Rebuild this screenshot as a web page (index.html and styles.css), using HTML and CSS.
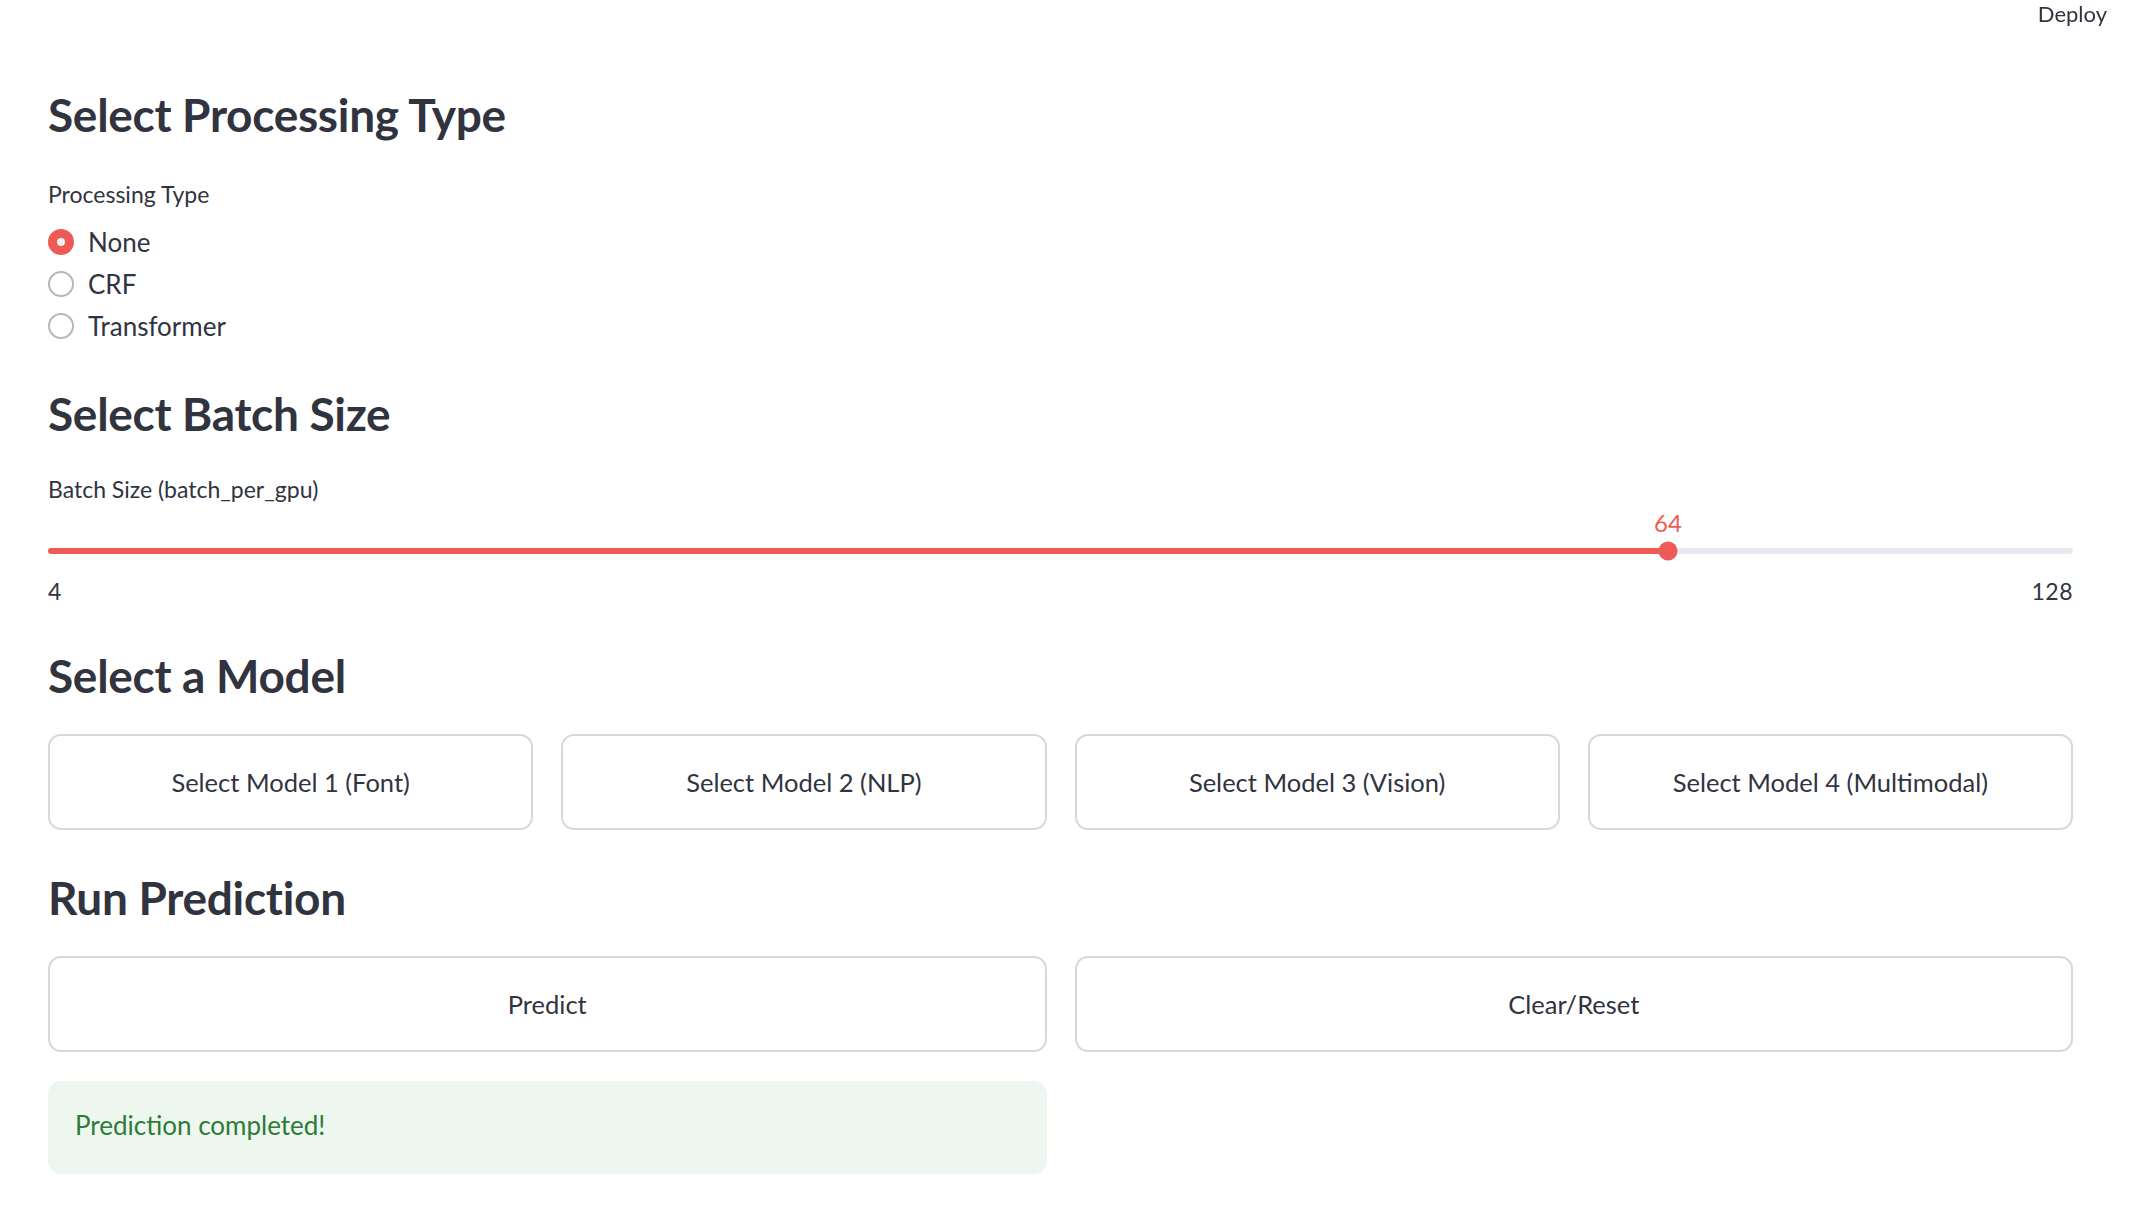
FILE: index.html
```html
<!DOCTYPE html>
<html lang="en">
<head>
<meta charset="utf-8">
<title>Streamlit</title>
<link rel="stylesheet" href="styles.css">
</head>
<body>
<header class="toolbar">
  <span class="deploy">Deploy</span>
</header>
<main class="block">
  <h3 class="heading h-first">Select Processing Type</h3>
  <div class="label label-radio">Processing Type</div>
  <div class="radio-group">
    <div class="radio-row"><span class="radio checked"></span><span class="radio-text">None</span></div>
    <div class="radio-row"><span class="radio"></span><span class="radio-text">CRF</span></div>
    <div class="radio-row"><span class="radio"></span><span class="radio-text">Transformer</span></div>
  </div>

  <h3 class="heading h-batch">Select Batch Size</h3>
  <div class="label label-slider">Batch Size (batch_per_gpu)</div>
  <div class="slider">
    <div class="slider-value-row">
      <span class="slider-value" style="left: 80%;">64</span>
    </div>
    <div class="track">
      <div class="track-fill" style="width: 80%;"></div>
      <span class="thumb" style="left: 80%;"></span>
    </div>
    <div class="ticks"><span>4</span><span>128</span></div>
  </div>

  <h3 class="heading h-model">Select a Model</h3>
  <div class="btn-row four">
    <button class="btn">Select Model 1 (Font)</button>
    <button class="btn">Select Model 2 (NLP)</button>
    <button class="btn">Select Model 3 (Vision)</button>
    <button class="btn">Select Model 4 (Multimodal)</button>
  </div>

  <h3 class="heading h-run">Run Prediction</h3>
  <div class="btn-row two">
    <button class="btn">Predict</button>
    <button class="btn">Clear/Reset</button>
  </div>
  <div class="result-row">
    <div class="success">Prediction completed!</div>
    <div></div>
  </div>
</main>
</body>
</html>
```

FILE: styles.css
```css
* { box-sizing: border-box; }
html, body {
  margin: 0;
  padding: 0;
  background: #ffffff;
}
body {
  font-family: "Lato", "Source Sans Pro", "Noto Sans", sans-serif;
  color: #31333f;
  width: 2138px;
  height: 1226px;
  overflow: hidden;
}
.toolbar {
  position: fixed;
  top: 0;
  right: 0;
  height: 27px;
  padding-right: 31px;
  display: flex;
  align-items: center;
}
.deploy {
  font-size: 22px;
  line-height: 27px;
  color: #31333f;
}
.block {
  padding: 0 65px 0 48px;
  display: flex;
  flex-direction: column;
}
.heading {
  margin: 0;
  font-size: 46px;
  line-height: 56px;
  height: 56px;
  font-weight: 700;
  color: #31333f;
  letter-spacing: -0.3px;
}
.h-first { margin-top: 87px; }
.h-batch { margin-top: 39px; }
.h-model { margin-top: 44px; }
.h-run { margin-top: 40px; }
.label {
  font-size: 23px;
  line-height: 30px;
  height: 30px;
}
.label-radio { margin-top: 36px; }
.label-slider { margin-top: 32px; }
.radio-group {
  margin-top: 12px;
  display: flex;
  flex-direction: column;
}
.radio-row {
  height: 42px;
  display: flex;
  align-items: center;
  gap: 14px;
}
.radio {
  width: 26px;
  height: 26px;
  border-radius: 50%;
  border: 2px solid #b7b7bb;
  background: #fff;
  flex: none;
}
.radio.checked {
  border: 9px solid #ee5b56;
  background: #eef0f4;
}
.radio-text {
  font-size: 26px;
  line-height: 32px;
}
.slider {
  margin-top: 6px;
  display: flex;
  flex-direction: column;
}
.slider-value-row {
  position: relative;
  height: 26px;
}
.slider-value {
  position: absolute;
  top: 0;
  transform: translateX(-50%);
  font-size: 24px;
  line-height: 26px;
  color: #ee5b56;
}
.track {
  position: relative;
  margin-top: 12px;
  height: 6px;
  border-radius: 3px;
  background: #e6e9ef;
}
.track-fill {
  height: 6px;
  border-radius: 3px 0 0 3px;
  background: #ee5b56;
}
.thumb {
  position: absolute;
  top: 50%;
  width: 19px;
  height: 19px;
  border-radius: 50%;
  background: #ee5b56;
  transform: translate(-50%, -50%);
}
.ticks {
  margin-top: 24px;
  display: flex;
  justify-content: space-between;
  font-size: 23px;
  line-height: 26px;
  height: 26px;
  letter-spacing: 0.5px;
}
.btn-row {
  margin-top: 30px;
  display: grid;
  column-gap: 28px;
}
.btn-row.four { grid-template-columns: repeat(4, 1fr); }
.btn-row.two { grid-template-columns: repeat(2, 1fr); }
.btn {
  height: 96px;
  border: 2px solid #d8d8db;
  border-radius: 13px;
  background: #ffffff;
  font-family: inherit;
  font-size: 25.5px;
  color: #31333f;
  padding: 0;
  cursor: pointer;
}
.result-row {
  margin-top: 29px;
  display: grid;
  grid-template-columns: repeat(2, 1fr);
  column-gap: 28px;
}
.success {
  height: 93px;
  border-radius: 13px;
  background: #edf7ef;
  color: #2e7b37;
  font-size: 26px;
  display: flex;
  align-items: center;
  padding-left: 27px;
  padding-bottom: 6px;
}
```
